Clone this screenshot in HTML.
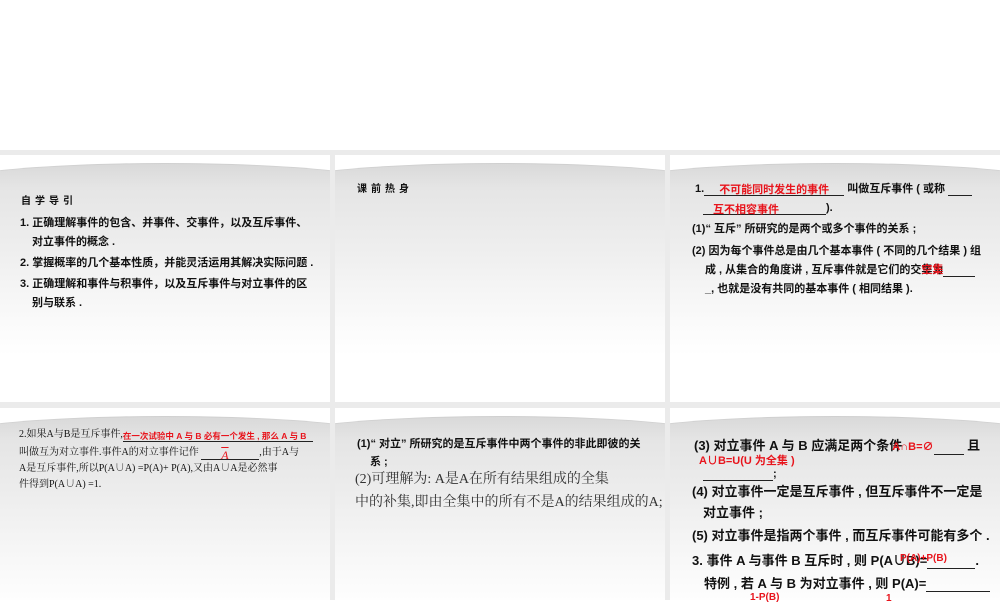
<!DOCTYPE html><html><head><meta charset="utf-8"><style>
body{margin:0;width:1000px;height:600px;background:#fff;position:relative;overflow:hidden;font-family:"Liberation Sans","Noto Sans CJK SC",sans-serif;color:#111}
.bg{position:absolute;left:0;top:150px;width:1000px;height:450px;background:#ebebeb}
.p{position:absolute;overflow:hidden;background:#fff}
.p:before{content:"";position:absolute;left:-20%;top:8px;width:140%;height:240px;border-radius:50% 50% 0 0 / 24px 24px 0 0;background:linear-gradient(#d9d9d9 0,#e5e5e5 10%,#eeeeee 35%,#f8f8f8 60%,#fff 80%);border-top:1px solid #d0d0d0}
.t{position:absolute;white-space:nowrap;font-size:11px;line-height:14px;font-weight:bold}
.r{color:#e8141c}
.u{display:inline-block;border-bottom:1px solid #222;height:12px;vertical-align:bottom}
.s{font-family:"Liberation Serif","Noto Serif CJK SC",serif;font-weight:normal}
</style></head><body>
<div class="bg"></div>
<div class="p" style="left:0;top:155px;width:330px;height:247px"></div>
<div class="p" style="left:335px;top:155px;width:330px;height:247px"></div>
<div class="p" style="left:670px;top:155px;width:330px;height:247px"></div>
<div class="p" style="left:0;top:408px;width:330px;height:192px"></div>
<div class="p" style="left:335px;top:408px;width:330px;height:192px"></div>
<div class="p" style="left:670px;top:408px;width:330px;height:192px"></div>

<div class="t" style="left:21px;top:195px;font-size:10px;letter-spacing:4px">自学导引</div>
<div class="t" style="left:20px;top:216px">1. 正确理解事件的包含、并事件、交事件，以及互斥事件、</div>
<div class="t" style="left:32px;top:235px">对立事件的概念 .</div>
<div class="t" style="left:20px;top:256px">2. 掌握概率的几个基本性质，并能灵活运用其解决实际问题 .</div>
<div class="t" style="left:20px;top:277px">3. 正确理解和事件与积事件，以及互斥事件与对立事件的区</div>
<div class="t" style="left:32px;top:296px">别与联系 .</div>

<div class="t" style="left:357px;top:183px;font-size:10px;letter-spacing:4px">课前热身</div>

<div class="t" style="left:695px;top:182px">1.<span class="u r" style="width:140px;text-align:center">不可能同时发生的事件</span> 叫做互斥事件 ( 或称 <span class="u" style="width:24px"></span></div>
<div class="t" style="left:703px;top:201px"><span class="u r" style="width:123px;padding-left:10px;box-sizing:border-box">互不相容事件</span>).</div>
<div class="t" style="left:692px;top:222px">(1)“ 互斥” 所研究的是两个或多个事件的关系 ;</div>
<div class="t" style="left:692px;top:244px">(2) 因为每个事件总是由几个基本事件 ( 不同的几个结果 ) 组</div>
<div class="t" style="left:705px;top:263px">成 , 从集合的角度讲 , 互斥事件就是它们的交集为<span class="r" style="margin-left:-22px">空集</span><span class="u" style="width:32px"></span></div>
<div class="t" style="left:705px;top:282px">_, 也就是没有共同的基本事件 ( 相同结果 ).</div>

<div class="t s" style="left:19px;top:428px;font-size:10px">2.如果A与B是互斥事件,<span class="u r" style="width:190px;font-family:'Liberation Sans','Noto Sans CJK SC';font-weight:bold;font-size:8.5px">在一次试验中 A 与 B 必有一个发生 , 那么 A 与 B</span></div>
<div class="t s" style="left:19px;top:446px;font-size:10px">叫做互为对立事件.事件A的对立事件记作 <span class="u r" style="width:58px;padding-left:20px;box-sizing:border-box;font-style:italic;text-decoration:overline;font-size:12px">A</span>,由于A与</div>
<div class="t s" style="left:19px;top:462px;font-size:10px">A是互斥事件,所以P(A∪A) =P(A)+ P(A),又由A∪A是必然事</div>
<div class="t s" style="left:19px;top:478px;font-size:10px">件得到P(A∪A) =1.</div>

<div class="t" style="left:357px;top:437px">(1)“ 对立” 所研究的是互斥事件中两个事件的非此即彼的关</div>
<div class="t" style="left:370px;top:455px">系 ;</div>
<div class="t s" style="left:355px;top:472px;font-size:14px;line-height:16px;color:#333">(2)可理解为: A是A在所有结果组成的全集</div>
<div class="t s" style="left:355px;top:495px;font-size:14px;line-height:16px;color:#333">中的补集,即由全集中的所有不是A的结果组成的A;</div>

<div class="t" style="left:694px;top:438px;font-size:13px;line-height:16px">(3) 对立事件 A 与 B 应满足两个条件<span class="r" style="margin-left:-10px;font-size:11px">A∩B=∅</span><span class="u" style="width:30px"></span> 且</div>
<div class="t r" style="left:699px;top:454px;font-size:11px">A∪B=U(U 为全集 )</div>
<div class="t" style="left:703px;top:467px"><span class="u" style="width:70px"></span>;</div>
<div class="t" style="left:692px;top:484px;font-size:13px;line-height:16px">(4) 对立事件一定是互斥事件 , 但互斥事件不一定是</div>
<div class="t" style="left:703px;top:505px;font-size:13px;line-height:16px">对立事件 ;</div>
<div class="t" style="left:692px;top:528px;font-size:13px;line-height:16px">(5) 对立事件是指两个事件 , 而互斥事件可能有多个 .</div>
<div class="t" style="left:692px;top:553px;font-size:13px;line-height:16px">3. 事件 A 与事件 B 互斥时 , 则 P(A∪B)=<span class="u" style="width:48px;height:14px"></span>.</div>
<div class="t r" style="left:900px;top:552px;font-size:10px">P(A)+P(B)</div>
<div class="t" style="left:704px;top:576px;font-size:13px;line-height:16px">特例 , 若 A 与 B 为对立事件 , 则 P(A)=<span class="u" style="width:64px;height:14px"></span></div>
<div class="t r" style="left:750px;top:591px;font-size:10px">1-P(B)</div>
<div class="t r" style="left:886px;top:592px;font-size:10px">1</div>
</body></html>
